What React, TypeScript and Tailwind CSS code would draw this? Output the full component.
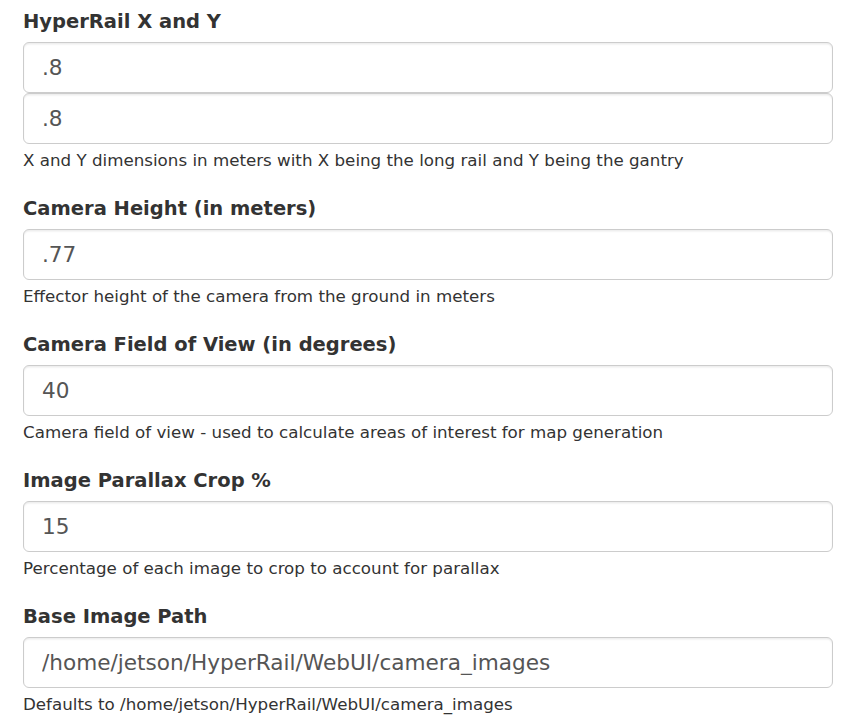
const fields = [
  {
    label: 'HyperRail X and Y',
    values: ['.8', '.8'],
    help: 'X and Y dimensions in meters with X being the long rail and Y being the gantry',
  },
  {
    label: 'Camera Height (in meters)',
    values: ['.77'],
    help: 'Effector height of the camera from the ground in meters',
  },
  {
    label: 'Camera Field of View (in degrees)',
    values: ['40'],
    help: 'Camera field of view - used to calculate areas of interest for map generation',
  },
  {
    label: 'Image Parallax Crop %',
    values: ['15'],
    help: 'Percentage of each image to crop to account for parallax',
  },
  {
    label: 'Base Image Path',
    values: ['/home/jetson/HyperRail/WebUI/camera_images'],
    help: 'Defaults to /home/jetson/HyperRail/WebUI/camera_images',
  },
];

export default function App() {
  return (
    <div
      className="min-h-screen bg-white pt-[8px] pl-[23px] pr-[18px] text-[#333]"
      style={{ fontFamily: '"DejaVu Sans", Verdana, sans-serif' }}
    >
      {fields.map((f) => (
        <div key={f.label} className="mb-[24px]">
          <label className="mb-[6px] block text-[19.5px] leading-[28px] font-bold">
            {f.label}
          </label>
          {f.values.map((v, i) => (
            <input
              key={i}
              type="text"
              defaultValue={v}
              className="block h-[51px] w-full rounded-[6px] border border-[#ccc] bg-white px-[18px] text-[21.6px] text-[#555] shadow-[inset_0_1.5px_1.5px_rgba(0,0,0,0.075)] outline-none"
            />
          ))}
          <p className="mt-[5px] text-[16.7px] leading-[22px]">{f.help}</p>
        </div>
      ))}
    </div>
  );
}
